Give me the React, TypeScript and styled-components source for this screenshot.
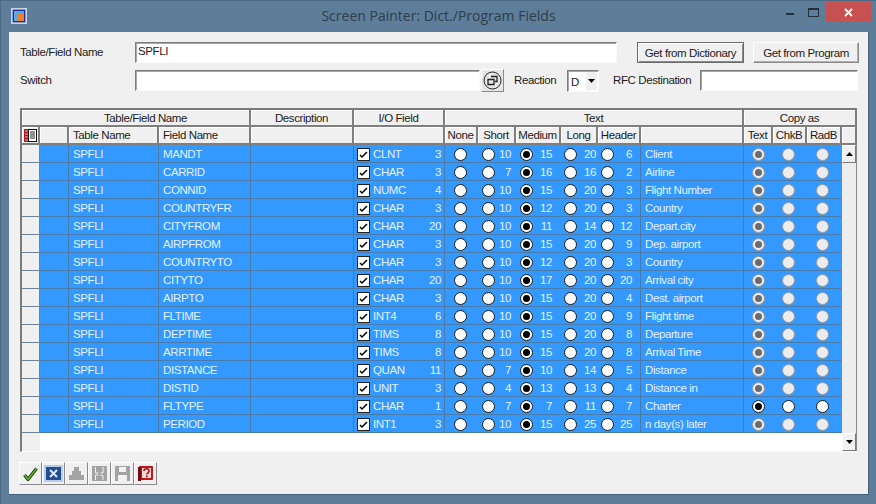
import { createGlobalStyle } from "styled-components";
import styled from "styled-components";

const GlobalStyle = createGlobalStyle`
  html, body {
    margin: 0;
    padding: 0;
    width: 876px;
    height: 504px;
    overflow: hidden;
    background: #5d7d99;
    font-family: "Liberation Sans", Arial, sans-serif;
    font-size: 11.5px;
    letter-spacing: -0.4px;
    color: #1c1c1c;
  }
`;

const Window = styled.div`
  width: 876px;
  height: 504px;
  box-sizing: border-box;
  display: flex;
  flex-direction: column;
  border-top: 1px solid #4c6b86;
  border-left: 1px solid #4c6b86;
`;

const TitleBar = styled.div`
  height: 31px;
  flex: none;
  display: flex;
  align-items: flex-start;
  position: relative;
`;

const AppIcon = styled.svg`
  width: 16px;
  height: 16px;
  margin: 7px 0 0 10px;
`;

const Title = styled.div`
  position: absolute;
  left: 0;
  right: 0;
  top: 6px;
  text-align: center;
  font-family: "Open Sans", sans-serif;
  font-size: 14px;
  letter-spacing: 0;
  line-height: 18px;
  color: #2f3e4b;
`;

const WinButtons = styled.div`
  margin-left: auto;
  margin-right: 5px;
  display: flex;
  align-items: flex-start;
`;

const WinButton = styled.div<{ $w: number; $close?: boolean }>`
  width: ${(p) => p.$w}px;
  height: 20px;
  margin-top: 1px;
  display: flex;
  align-items: center;
  justify-content: center;
  background: ${(p) => (p.$close ? "#c75050" : "transparent")};
`;

const Client = styled.div`
  width: 860px;
  height: 463px;
  margin-left: 8px;
  box-sizing: border-box;
  background: #f0f0f0;
  border-bottom: 1px solid #46627a;
  border-right: 1px solid #46627a;
  padding: 10px 11px 0 11px;
`;

const FormRow = styled.div<{ $mt?: number }>`
  display: flex;
  align-items: center;
  height: 21px;
  margin-top: ${(p) => p.$mt ?? 0}px;
`;

const Label = styled.span<{ $w?: number; $ml?: number }>`
  width: ${(p) => (p.$w ? `${p.$w}px` : "auto")};
  margin-left: ${(p) => p.$ml ?? 0}px;
  padding-bottom: 2px;
  flex: none;
  white-space: nowrap;
`;

const Input = styled.div<{ $w: number; $ml?: number }>`
  width: ${(p) => p.$w}px;
  height: 21px;
  margin-left: ${(p) => p.$ml ?? 0}px;
  flex: none;
  box-sizing: border-box;
  background: #fff;
  border-style: solid;
  border-width: 1px;
  border-color: #7c7c7c #fafafa #fafafa #7c7c7c;
  box-shadow: inset 1px 1px 0 #a8a8a8;
  padding: 1px 0 0 2px;
  line-height: 14px;
`;

const Button = styled.div<{ $w: number; $ml: number; $default?: boolean }>`
  width: ${(p) => p.$w}px;
  height: 21px;
  margin-left: ${(p) => p.$ml}px;
  flex: none;
  box-sizing: border-box;
  display: flex;
  align-items: center;
  justify-content: center;
  white-space: nowrap;
  background: #f0f0f0;
  border: 1px solid;
  border-color: ${(p) =>
    p.$default ? "#6a6a6a" : "#ffffff #8a8a8a #8a8a8a #ffffff"};
  box-shadow: ${(p) =>
    p.$default
      ? "inset 1px 1px 0 #fff, inset -1px -1px 0 #8a8a8a"
      : "inset -1px -1px 0 #b0b0b0"};
`;

const PickButton = styled.div`
  width: 23px;
  height: 23px;
  margin-left: 1px;
  flex: none;
  box-sizing: border-box;
  display: flex;
  align-items: center;
  justify-content: center;
  border: 1px solid;
  border-color: #fff #8a8a8a #8a8a8a #fff;
  background: #e6e6e6;
`;

const Combo = styled.div`
  width: 32px;
  height: 22px;
  margin-left: 9px;
  flex: none;
  box-sizing: border-box;
  display: flex;
  background: #fff;
  border: 1px solid;
  border-color: #7c7c7c #fafafa #fafafa #7c7c7c;
  box-shadow: inset 1px 1px 0 #a8a8a8;
`;

const ComboValue = styled.span`
  width: 14px;
  padding: 4px 0 0 3px;
  line-height: 14px;
`;

const ComboButton = styled.span`
  flex: 1;
  margin: 1px;
  background: #f0f0f0;
  display: flex;
  align-items: center;
  justify-content: center;
`;

const Table = styled.div`
  margin-top: 17px;
  width: 837px;
  box-sizing: border-box;
  display: grid;
  grid-template-columns: 18px 29px 90px 92px 103px 91px 33px 38px 45px 37px 43px 103px 29px 34px 35px 15px;
  grid-template-rows: 17px repeat(18, 18px);
  border-style: solid;
  border-width: 2px 0 1px 2px;
  border-color: #7a7a7a #7a7a7a #fafafa #7a7a7a;
  background: #fff;
`;

const Head = styled.div<{ $span?: number; $center?: boolean; $inset?: number }>`
  grid-column: span ${(p) => p.$span ?? 1};
  box-sizing: border-box;
  background: #f0f0f0;
  border-right: 2px solid #7f7f7f;
  border-bottom: 2px solid #7f7f7f;
  box-shadow: inset 1px 1px 0 #fff;
  display: flex;
  align-items: center;
  justify-content: ${(p) => (p.$center ? "center" : "flex-start")};
  padding-left: ${(p) => p.$inset ?? (p.$center ? 0 : 4)}px;
  white-space: nowrap;
  overflow: hidden;
`;

const RowHead = styled.div`
  background: #f0f0f0;
  border-right: 1px solid #6f8296;
  border-bottom: 1px solid #6f8296;
`;

const Cell = styled.div<{ $pad?: number }>`
  box-sizing: border-box;
  background: #3399ff;
  border-right: 1px solid #4a7ba8;
  border-bottom: 1px solid #4a7ba8;
  color: #e4f1ff;
  display: flex;
  align-items: center;
  padding-left: ${(p) => p.$pad ?? 4}px;
  padding-top: 1px;
  white-space: nowrap;
  overflow: hidden;
`;

const RadioCell = styled(Cell)`
  border-right-color: #3399ff;
`;

const IoCell = styled(Cell)`
  padding-right: 3px;
`;

const CheckBox = styled.span`
  width: 13px;
  height: 13px;
  flex: none;
  box-sizing: border-box;
  background: #fff;
  border: 1px solid #222;
  margin-right: 3px;
  display: flex;
  align-items: center;
  justify-content: center;
`;

const Num = styled.span<{ $w: number }>`
  width: ${(p) => p.$w}px;
  text-align: right;
  flex: none;
`;

const FieldLength = styled.span`
  margin-left: auto;
`;

const Radio = styled.span<{ $on?: boolean; $off?: boolean }>`
  width: 13px;
  height: 13px;
  flex: none;
  box-sizing: border-box;
  border-radius: 50%;
  background: ${(p) => (p.$off ? "#ececec" : "#fff")};
  border: 1px solid ${(p) => (p.$off ? "#9a9a9a" : "#1a1a1a")};
  display: flex;
  align-items: center;
  justify-content: center;
  &::after {
    content: "";
    display: ${(p) => (p.$on ? "block" : "none")};
    width: 7px;
    height: 7px;
    border-radius: 50%;
    background: ${(p) => (p.$off ? "#6b6b6b" : "#000")};
  }
`;

const ScrollBar = styled.div`
  grid-column: 16;
  grid-row: 3 / span 17;
  display: flex;
  flex-direction: column;
  background: #f0f0f0;
  box-sizing: border-box;
  border-right: 1px solid #8a8a8a;
`;

const ScrollButton = styled.div`
  height: 18px;
  flex: none;
  box-sizing: border-box;
  background: #f0f0f0;
  border: 1px solid;
  border-color: #fff #7a7a7a #7a7a7a #fff;
  display: flex;
  align-items: center;
  justify-content: center;
`;

const ScrollTrack = styled.div`
  flex: 1;
  background: #ededed;
`;

const FillerHead = styled.div`
  background: #f0f0f0;
`;

const Filler = styled.div`
  grid-column: span 14;
  background: #fff;
`;

const Toolbar = styled.div`
  margin-top: 10px;
  margin-left: -1px;
  display: flex;
`;

const ToolButton = styled.div`
  width: 23px;
  height: 23px;
  box-sizing: border-box;
  display: flex;
  align-items: center;
  justify-content: center;
  border: 1px solid;
  border-color: #fff #8a8a8a #8a8a8a #fff;
`;

type Row = [string, string, number, number, number, number, number, string];

const rows: Row[] = [
  ["MANDT", "CLNT", 3, 10, 15, 20, 6, "Client"],
  ["CARRID", "CHAR", 3, 7, 16, 16, 2, "Airline"],
  ["CONNID", "NUMC", 4, 10, 15, 20, 3, "Flight Number"],
  ["COUNTRYFR", "CHAR", 3, 10, 12, 20, 3, "Country"],
  ["CITYFROM", "CHAR", 20, 10, 11, 14, 12, "Depart.city"],
  ["AIRPFROM", "CHAR", 3, 10, 15, 20, 9, "Dep. airport"],
  ["COUNTRYTO", "CHAR", 3, 10, 12, 20, 3, "Country"],
  ["CITYTO", "CHAR", 20, 10, 17, 20, 20, "Arrival city"],
  ["AIRPTO", "CHAR", 3, 10, 15, 20, 4, "Dest. airport"],
  ["FLTIME", "INT4", 6, 10, 15, 20, 9, "Flight time"],
  ["DEPTIME", "TIMS", 8, 10, 15, 20, 8, "Departure"],
  ["ARRTIME", "TIMS", 8, 10, 15, 20, 8, "Arrival Time"],
  ["DISTANCE", "QUAN", 11, 7, 10, 14, 5, "Distance"],
  ["DISTID", "UNIT", 3, 4, 13, 13, 4, "Distance in"],
  ["FLTYPE", "CHAR", 1, 7, 7, 11, 7, "Charter"],
  ["PERIOD", "INT1", 3, 10, 15, 25, 25, "n day(s) later"],
];

function Arrow({ up }: { up?: boolean }) {
  return (
    <svg width="7" height="4" viewBox="0 0 7 4">
      <path d={up ? "M3.5 0L7 4H0z" : "M0 0h7L3.5 4z"} fill="#000" />
    </svg>
  );
}

function App() {
  return (
    <Window>
      <GlobalStyle />
      <TitleBar>
        <AppIcon viewBox="0 0 16 16">
          <rect x="0.5" y="0.5" width="15" height="15" fill="#fff" stroke="#c9d6e2" />
          <rect x="1.5" y="1.5" width="13" height="13" fill="#1c2fa0" />
          <rect x="3" y="3" width="10" height="10" fill="#58a8e8" />
          <rect x="6" y="6" width="7" height="7" fill="#f08020" />
        </AppIcon>
        <Title>Screen Painter: Dict./Program Fields</Title>
        <WinButtons>
          <WinButton $w={21}>
            <svg width="8" height="8" viewBox="0 0 8 8">
              <rect y="5" width="8" height="2" fill="#22303c" />
            </svg>
          </WinButton>
          <WinButton $w={26}>
            <svg width="11" height="9" viewBox="0 0 11 9">
              <path d="M.5 1.5h10v7H.5z" fill="none" stroke="#22303c" />
              <rect width="11" height="2" fill="#22303c" />
            </svg>
          </WinButton>
          <WinButton $w={45} $close>
            <svg width="9" height="9" viewBox="0 0 9 9">
              <path d="M1 1l7 7M8 1L1 8" stroke="#fff" strokeWidth="1.8" />
            </svg>
          </WinButton>
        </WinButtons>
      </TitleBar>
      <Client>
        <FormRow>
          <Label $w={115}>Table/Field Name</Label>
          <Input $w={482}>SPFLI</Input>
          <Button $w={107} $ml={20} $default>
            Get from Dictionary
          </Button>
          <Button $w={106} $ml={9}>
            Get from Program
          </Button>
        </FormRow>
        <FormRow $mt={7}>
          <Label $w={115}>Switch</Label>
          <Input $w={345} />
          <PickButton>
            <svg width="19" height="19" viewBox="0 0 19 19">
              <circle cx="9.5" cy="9.5" r="8.5" fill="none" stroke="#222" />
              <path d="M8 5.5h6v5h-2M5 8.5h6v5H5z" fill="none" stroke="#222" strokeWidth="1.3" />
            </svg>
          </PickButton>
          <Label $w={44} $ml={10}>
            Reaction
          </Label>
          <Combo>
            <ComboValue>D</ComboValue>
            <ComboButton>
              <Arrow />
            </ComboButton>
          </Combo>
          <Label $w={77} $ml={14}>
            RFC Destination
          </Label>
          <Input $w={158} $ml={10} />
        </FormRow>
        <Table>
          <Head $span={4} $center $inset={20}>
            Table/Field Name
          </Head>
          <Head $center>Description</Head>
          <Head $center>I/O Field</Head>
          <Head $span={6} $center>
            Text
          </Head>
          <Head $span={4} $center>
            Copy as
          </Head>

          <Head $center>
            <svg width="13" height="13" viewBox="0 0 13 13">
              <rect x="0" y="0" width="5" height="13" fill="#a81c1c" />
              <path d="M1 2h3M1 5h3M1 8h3M1 11h3" stroke="#e8b0b0" />
              <rect x="4.5" y="0.5" width="8" height="12" fill="#fff" stroke="#111" />
              <path d="M6 3h5M6 5h5M6 7h5M6 9h5" stroke="#222" />
            </svg>
          </Head>
          <Head />
          <Head>Table Name</Head>
          <Head>Field Name</Head>
          <Head />
          <Head />
          <Head $center>None</Head>
          <Head $center>Short</Head>
          <Head $center>Medium</Head>
          <Head $center>Long</Head>
          <Head $center>Header</Head>
          <Head />
          <Head $center>Text</Head>
          <Head $center>ChkB</Head>
          <Head $center>RadB</Head>
          <Head />

          {rows.map((r) => {
            const editable = r[0] === "FLTYPE";
            return [
              <RowHead key={r[0] + "h"} />,
              <Cell key={r[0] + "b"} />,
              <Cell key={r[0] + "t"}>SPFLI</Cell>,
              <Cell key={r[0] + "f"}>{r[0]}</Cell>,
              <Cell key={r[0] + "d"} />,
              <IoCell key={r[0] + "io"} $pad={3}>
                <CheckBox>
                  <svg width="9" height="9" viewBox="0 0 9 9">
                    <path d="M1 5l2 2 5-5" fill="none" stroke="#000" strokeWidth="1.5" />
                  </svg>
                </CheckBox>
                {r[1]}
                <FieldLength>{r[2]}</FieldLength>
              </IoCell>,
              <RadioCell key={r[0] + "n"} $pad={9}>
                <Radio />
              </RadioCell>,
              <RadioCell key={r[0] + "s"} $pad={4}>
                <Radio />
                <Num $w={16}>{r[3]}</Num>
              </RadioCell>,
              <RadioCell key={r[0] + "m"} $pad={4}>
                <Radio $on />
                <Num $w={19}>{r[4]}</Num>
              </RadioCell>,
              <RadioCell key={r[0] + "l"} $pad={3}>
                <Radio />
                <Num $w={19}>{r[5]}</Num>
              </RadioCell>,
              <Cell key={r[0] + "hd"} $pad={3}>
                <Radio />
                <Num $w={18}>{r[6]}</Num>
              </Cell>,
              <Cell key={r[0] + "x"}>{r[7]}</Cell>,
              <RadioCell key={r[0] + "c1"} $pad={8}>
                <Radio $on $off={!editable} />
              </RadioCell>,
              <RadioCell key={r[0] + "c2"} $pad={9}>
                <Radio $off={!editable} />
              </RadioCell>,
              <RadioCell key={r[0] + "c3"} $pad={9}>
                <Radio $off={!editable} />
              </RadioCell>,
            ];
          })}

          <ScrollBar>
            <ScrollButton>
              <Arrow up />
            </ScrollButton>
            <ScrollTrack />
            <ScrollButton>
              <Arrow />
            </ScrollButton>
          </ScrollBar>
          <FillerHead />
          <Filler />
        </Table>
        <Toolbar>
          <ToolButton>
            <svg width="15" height="14" viewBox="0 0 15 14">
              <path d="M1.5 8l3.5 4.5L13.5 1.5" fill="none" stroke="#14300a" strokeWidth="3.2" />
              <path d="M1.5 8l3.5 4.5L13.5 1.5" fill="none" stroke="#62b52c" strokeWidth="1.6" />
            </svg>
          </ToolButton>
          <ToolButton>
            <svg width="19" height="17" viewBox="0 0 19 17">
              <rect width="19" height="17" fill="#b9cdea" />
              <rect x="2" y="2" width="15" height="13" fill="#234f92" />
              <path d="M6 5l7 7M13 5l-7 7" stroke="#dfe9f8" strokeWidth="2" />
            </svg>
          </ToolButton>
          <ToolButton>
            <svg width="15" height="13" viewBox="0 0 15 13">
              <path d="M5 0h5v4h2v4h3v5H0V8h3V4h2z" fill="#a3a3a3" />
            </svg>
          </ToolButton>
          <ToolButton>
            <svg width="15" height="15" viewBox="0 0 15 15">
              <rect width="15" height="15" fill="#a3a3a3" />
              <path d="M3.5 1v6h3M3.5 14V9h3M11 1v6H8.5M8.5 9.5H11V14" fill="none" stroke="#f2f2f2" />
            </svg>
          </ToolButton>
          <ToolButton>
            <svg width="15" height="15" viewBox="0 0 15 15">
              <rect width="15" height="15" fill="#a3a3a3" />
              <rect x="4" y="1" width="7" height="5" fill="#f2f2f2" />
              <rect x="3" y="9" width="9" height="6" fill="#f2f2f2" />
            </svg>
          </ToolButton>
          <ToolButton>
            <svg width="15" height="15" viewBox="0 0 15 15">
              <rect x="1" y="0" width="14" height="14" rx="1" fill="#c41418" />
              <rect x="0" y="1" width="3" height="14" fill="#7c0a0c" />
              <rect x="4" y="2" width="9" height="10" fill="#f7d9d9" />
              <path d="M6 5c0-3 5-3 5 0 0 2-2.2 2-2.2 3.5M8.8 9.6v1.6" fill="none" stroke="#a01014" strokeWidth="1.6" />
            </svg>
          </ToolButton>
        </Toolbar>
      </Client>
    </Window>
  );
}

export default App;
